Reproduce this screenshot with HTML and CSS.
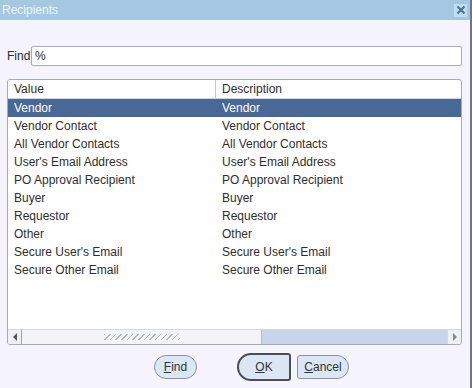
FILE: index.html
```html
<!DOCTYPE html>
<html lang="en">
<head>
    <meta charset="UTF-8">
    <title>Recipients</title>
    <link rel="stylesheet" href="styles.css">
</head>
<body>
    <div class="dialog">
        <div class="titlebar">
            <span class="title">Recipients</span>
            <span class="close">
                <svg width="12" height="12" viewBox="0 0 12 12">
                    <path d="M2.5 2.5 L9.5 9.5 M9.5 2.5 L2.5 9.5" stroke="#4576a6" stroke-width="2.2"/>
                </svg>
            </span>
        </div>
        <div class="content">
            <div class="findrow">
                <label for="find">Find</label>
                <input id="find" type="text" value="%">
            </div>
            <div class="list">
                <div class="row head">
                    <div class="cell c1">Value</div>
                    <div class="cell c2">Description</div>
                </div>
                <div class="rows">
                    <div class="row sel"><div class="cell c1">Vendor</div><div class="cell c2">Vendor</div></div>
                    <div class="row"><div class="cell c1">Vendor Contact</div><div class="cell c2">Vendor Contact</div></div>
                    <div class="row"><div class="cell c1">All Vendor Contacts</div><div class="cell c2">All Vendor Contacts</div></div>
                    <div class="row"><div class="cell c1">User's Email Address</div><div class="cell c2">User's Email Address</div></div>
                    <div class="row"><div class="cell c1">PO Approval Recipient</div><div class="cell c2">PO Approval Recipient</div></div>
                    <div class="row"><div class="cell c1">Buyer</div><div class="cell c2">Buyer</div></div>
                    <div class="row"><div class="cell c1">Requestor</div><div class="cell c2">Requestor</div></div>
                    <div class="row"><div class="cell c1">Other</div><div class="cell c2">Other</div></div>
                    <div class="row"><div class="cell c1">Secure User's Email</div><div class="cell c2">Secure User's Email</div></div>
                    <div class="row"><div class="cell c1">Secure Other Email</div><div class="cell c2">Secure Other Email</div></div>
                </div>
                <div class="hscroll">
                    <div class="arrow">
                        <svg width="6" height="8" viewBox="0 0 6 8"><path d="M5 0 L1 4 L5 8 Z" fill="#555"/></svg>
                    </div>
                    <div class="thumb"><span class="grip"></span></div>
                    <div class="track"></div>
                    <div class="arrow">
                        <svg width="6" height="8" viewBox="0 0 6 8"><path d="M1 0 L5 4 L1 8 Z" fill="#888"/></svg>
                    </div>
                </div>
            </div>
            <div class="buttons">
                <button class="btn pill"><u>F</u>ind</button>
                <button class="btn ok"><u>O</u>K</button>
                <button class="btn cancel"><u>C</u>ancel</button>
            </div>
        </div>
    </div>
</body>
</html>
```

FILE: styles.css
```css
body {
    margin: 0;
    background-color: #f5f3fc;
}
* {
    box-sizing: border-box;
    font-family: "Liberation Sans", Arial, sans-serif;
    font-size: 12px;
    color: #2e2e2e;
}
.dialog {
    width: 472px;
    height: 388px;
    border-right: 2px solid #6f7480;
    display: flex;
    flex-direction: column;
}
.titlebar {
    height: 20px;
    background-color: #a5c8e2;
    display: flex;
    align-items: center;
    justify-content: space-between;
    padding: 0 3px 0 2px;
}
.title {
    color: #eef5fb;
    font-size: 12px;
}
.close {
    width: 13px;
    height: 13px;
    background-color: #c3dcef;
    display: flex;
    align-items: center;
    justify-content: center;
}
.content {
    flex-grow: 1;
    padding: 26px 8px 0 7px;
    display: flex;
    flex-direction: column;
}
.findrow {
    display: flex;
    align-items: center;
    height: 20px;
}
.findrow label {
    width: 24px;
}
.findrow input {
    flex-grow: 1;
    height: 20px;
    border: 1px solid #a9adb6;
    border-radius: 2px;
    background-color: #fff;
    padding: 0 3px;
    outline: none;
}
.list {
    margin-top: 13px;
    height: 266px;
    width: 455px;
    border: 1px solid #a8acb8;
    border-radius: 3px;
    background-color: #fff;
    display: flex;
    flex-direction: column;
    overflow: hidden;
}
.row {
    display: flex;
    height: 18px;
    align-items: center;
}
.cell {
    padding-left: 6px;
    white-space: nowrap;
}
.c1 {
    width: 208px;
}
.c2 {
    flex-grow: 1;
}
.head {
    height: 19px;
    border-bottom: 1px solid #d2d4dc;
}
.head .c1 {
    height: 100%;
    display: flex;
    align-items: center;
    border-right: 1px solid #c6c8d0;
}
.rows {
    flex-grow: 1;
}
.sel {
    background-color: #4a6896;
}
.sel .cell {
    color: #fff;
}
.hscroll {
    height: 15px;
    display: flex;
    border-top: 1px solid #d6d8e0;
}
.arrow {
    width: 14px;
    display: flex;
    align-items: center;
    justify-content: center;
    background-color: #eef0f6;
    border-right: 1px solid #9ea3ae;
}
.hscroll .arrow:last-child {
    border-right: none;
    border-left: 1px solid #d0d8e6;
}
.thumb {
    width: 240px;
    background-color: #f3f3f8;
    border-right: 1px solid #b8bcc6;
    display: flex;
    align-items: center;
    justify-content: center;
}
.grip {
    width: 76px;
    height: 6px;
    background-image: repeating-linear-gradient(135deg, #b4b8c4 0 1px, transparent 1px 4px);
}
.track {
    flex-grow: 1;
    background-color: #c6d5ea;
}
.buttons {
    display: flex;
    align-items: center;
    padding-left: 147px;
    margin-top: 8px;
}
.btn {
    background-color: #dce7f5;
    border: 1px solid #8c929c;
    padding: 0;
    color: #333;
}
.btn u {
    color: #333;
}
.pill {
    width: 43px;
    height: 24px;
    border-radius: 12px;
    margin-right: 40px;
}
.ok {
    width: 54px;
    height: 28px;
    border: 2px solid #4a4e56;
    border-radius: 14px 3px 3px 14px;
    margin-right: 6px;
}
.cancel {
    width: 52px;
    height: 24px;
    border-radius: 3px 12px 12px 3px;
}
```
